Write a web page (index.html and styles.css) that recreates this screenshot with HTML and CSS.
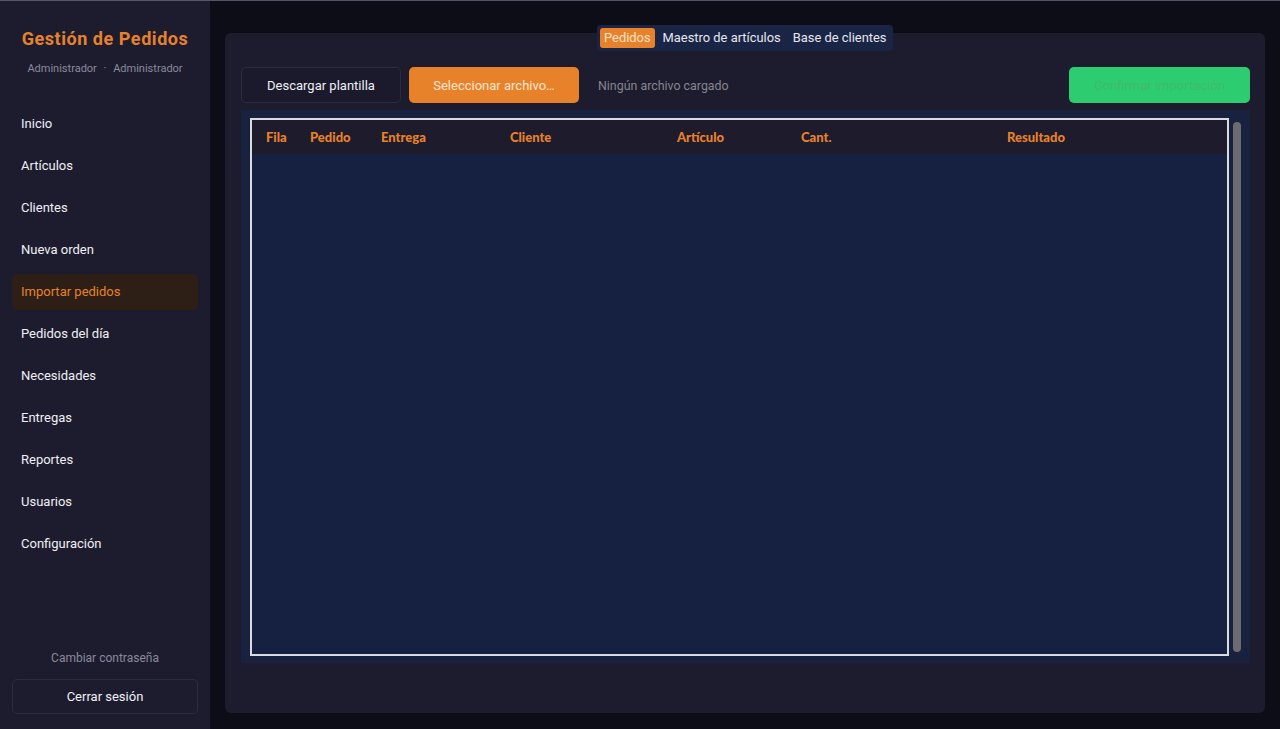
FILE: index.html
```html
<!DOCTYPE html>
<html lang="es">
<head>
  <meta charset="UTF-8">
  <title>Gestión de Pedidos</title>
  <link rel="stylesheet" href="styles.css">
</head>
<body>
  <div class="app">
    <aside class="sidebar">
      <div class="brand">
        <h1>Gestión de Pedidos</h1>
        <p class="user">Administrador <span class="dot">·</span> Administrador</p>
      </div>
      <nav class="nav">
        <a class="nav-item">Inicio</a>
        <a class="nav-item">Artículos</a>
        <a class="nav-item">Clientes</a>
        <a class="nav-item">Nueva orden</a>
        <a class="nav-item active">Importar pedidos</a>
        <a class="nav-item">Pedidos del día</a>
        <a class="nav-item">Necesidades</a>
        <a class="nav-item">Entregas</a>
        <a class="nav-item">Reportes</a>
        <a class="nav-item">Usuarios</a>
        <a class="nav-item">Configuración</a>
      </nav>
      <div class="side-bottom">
        <a class="change-pass">Cambiar contraseña</a>
        <button class="logout">Cerrar sesión</button>
      </div>
    </aside>

    <main class="main">
      <div class="tabs">
        <span class="tab active">Pedidos</span>
        <span class="tab">Maestro de artículos</span>
        <span class="tab">Base de clientes</span>
      </div>
      <section class="panel">
        <div class="toolbar">
          <button class="btn btn-dark">Descargar plantilla</button>
          <button class="btn btn-orange">Seleccionar archivo…</button>
          <span class="file-status">Ningún archivo cargado</span>
          <button class="btn btn-green">Confirmar importación</button>
        </div>
        <div class="table-wrap">
          <div class="table-frame">
            <div class="thead">
              <span class="c-fila">Fila</span>
              <span class="c-pedido">Pedido</span>
              <span class="c-entrega">Entrega</span>
              <span class="c-cliente">Cliente</span>
              <span class="c-articulo">Artículo</span>
              <span class="c-cant">Cant.</span>
              <span class="c-resultado">Resultado</span>
            </div>
            <div class="tbody"></div>
          </div>
          <div class="scrollbar"></div>
        </div>
      </section>
    </main>
  </div>
</body>
</html>
```

FILE: styles.css
```css
* {
  box-sizing: border-box;
}

body {
  margin: 0;
  font-family: Roboto, "Noto Sans", sans-serif;
  background-color: #0d0d17;
  color: #fff;
  height: 729px;
  overflow: hidden;
}

.app {
  display: flex;
  height: 729px;
  border-top: 1px solid #55556a;
}

/* Sidebar */
.sidebar {
  width: 210px;
  background-color: #1d1c2f;
  display: flex;
  flex-direction: column;
  padding: 0 12px;
}

.brand {
  text-align: center;
  padding-top: 27px;
}

.brand h1 {
  margin: 0;
  font-size: 18px;
  font-weight: 700;
  color: #e8822a;
  letter-spacing: 0.55px;
}

.user {
  margin: 13px 0 0;
  font-size: 11px;
  color: #8a8a9c;
}

.dot {
  margin: 0 4px;
}

.nav {
  display: flex;
  flex-direction: column;
  gap: 6px;
  margin-top: 31px;
}

.nav-item {
  display: block;
  height: 36px;
  line-height: 36px;
  padding: 0 9px;
  font-size: 13px;
  color: #f0f0f4;
  border-radius: 6px;
}

.nav-item.active {
  background-color: #2e1f16;
  color: #e8822a;
}

.side-bottom {
  margin-top: auto;
  padding-bottom: 15px;
  text-align: center;
}

.change-pass {
  display: block;
  font-size: 12px;
  color: #8a8a9c;
  margin-bottom: 14px;
}

.logout {
  width: 100%;
  height: 35px;
  background-color: #1d1c2f;
  border: 1px solid #2c2b40;
  border-radius: 5px;
  color: #f0f0f4;
  font-family: inherit;
  font-size: 13px;
}

/* Main */
.main {
  flex: 1;
  position: relative;
  padding: 32px 15px 15px;
}

.tabs {
  position: absolute;
  top: 24px;
  left: 387px;
  display: flex;
  gap: 4px;
  padding: 3px;
  background-color: #1a2444;
  border-radius: 4px;
}

.tab {
  padding: 0 4px;
  height: 20px;
  line-height: 20px;
  font-size: 12.9px;
  color: #e6e8f0;
  border-radius: 3px;
}

.tab.active {
  background-color: #e8822a;
  color: #fbe3cc;
}

.panel {
  height: 680px;
  background-color: #1d1c2e;
  border-radius: 6px;
  padding: 34px 15px 50px 16px;
}

.toolbar {
  display: flex;
  align-items: center;
  height: 36px;
  gap: 8px;
}

.btn {
  height: 36px;
  border-radius: 5px;
  font-family: inherit;
  font-size: 13px;
  border: none;
}

.btn-dark {
  width: 160px;
  background-color: #1b1a2c;
  border: 1px solid #2c2b40;
  color: #f0f0f4;
}

.btn-orange {
  width: 170px;
  background-color: #e8822a;
  color: #fce6d2;
}

.file-status {
  margin-left: 11px;
  font-size: 12.4px;
  color: #85858f;
}

.btn-green {
  margin-left: auto;
  width: 181px;
  background-color: #2ecc71;
  color: #3fbb6a;
}

.table-wrap {
  display: flex;
  height: 553px;
  margin-top: 7px;
  background-color: #18223f;
  padding: 8px 9px 7px 9px;
  gap: 4px;
}

.table-frame {
  flex: 1;
  display: flex;
  flex-direction: column;
  border: 2px solid #d9dbe2;
}

.thead {
  height: 34px;
  display: flex;
  align-items: center;
  background-color: #1d1b2c;
  font-family: Lato, sans-serif;
  font-weight: 900;
  font-size: 13px;
  color: #e8822a;
  position: relative;
}

.thead span {
  position: absolute;
}

.c-fila { left: 14px; }
.c-pedido { left: 58px; }
.c-entrega { left: 129px; }
.c-cliente { left: 258px; }
.c-articulo { left: 425px; }
.c-cant { left: 549px; }
.c-resultado { left: 755px; }

.tbody {
  flex: 1;
  background-color: #162040;
}

.scrollbar {
  width: 8px;
  margin: 4px 0 4px;
  background-color: #6c6c70;
  border-radius: 4px;
}
```
